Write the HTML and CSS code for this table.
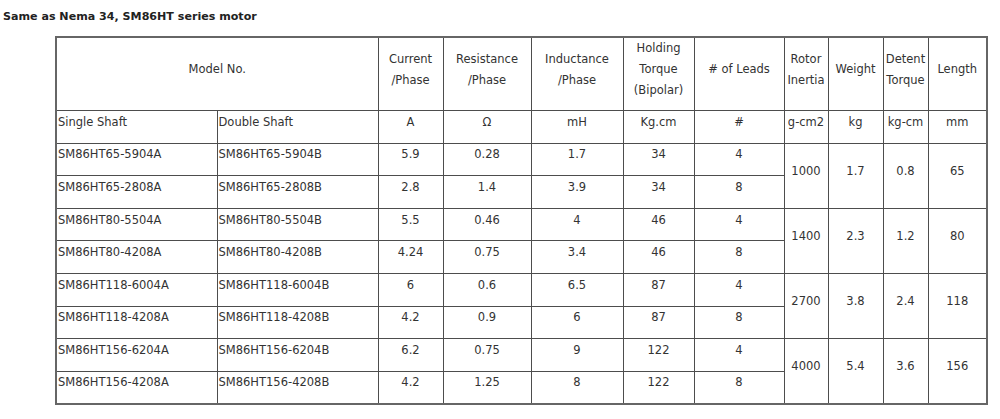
FILE: index.html
```html
<!DOCTYPE html>
<html>
<head>
<meta charset="utf-8">
<link rel="stylesheet" href="styles.css">
</head>
<body>
<p class="title">Same as Nema 34, SM86HT series motor</p>
<table class="spec">
  <colgroup>
    <col class="c-single"><col class="c-double"><col class="c-cur"><col class="c-res"><col class="c-ind"><col class="c-hold"><col class="c-leads"><col class="c-rotor"><col class="c-weight"><col class="c-detent"><col class="c-len">
  </colgroup>
  <tr class="head">
    <td colspan="2">Model No.</td>
    <td>Current<br>/Phase</td>
    <td>Resistance<br>/Phase</td>
    <td>Inductance<br>/Phase</td>
    <td>Holding<br>Torque<br>(Bipolar)</td>
    <td># of Leads</td>
    <td>Rotor<br>Inertia</td>
    <td>Weight</td>
    <td>Detent<br>Torque</td>
    <td>Length</td>
  </tr>
  <tr>
    <td class="l">Single Shaft</td>
    <td class="l">Double Shaft</td>
    <td>A</td><td>Ω</td><td>mH</td><td>Kg.cm</td><td>#</td><td>g-cm2</td><td>kg</td><td>kg-cm</td><td>mm</td>
  </tr>
  <tr>
    <td class="l">SM86HT65-5904A</td><td class="l">SM86HT65-5904B</td>
    <td>5.9</td><td>0.28</td><td>1.7</td><td>34</td><td>4</td>
    <td rowspan="2">1000</td><td rowspan="2">1.7</td><td rowspan="2">0.8</td><td rowspan="2">65</td>
  </tr>
  <tr>
    <td class="l">SM86HT65-2808A</td><td class="l">SM86HT65-2808B</td>
    <td>2.8</td><td>1.4</td><td>3.9</td><td>34</td><td>8</td>
  </tr>
  <tr>
    <td class="l">SM86HT80-5504A</td><td class="l">SM86HT80-5504B</td>
    <td>5.5</td><td>0.46</td><td>4</td><td>46</td><td>4</td>
    <td rowspan="2">1400</td><td rowspan="2">2.3</td><td rowspan="2">1.2</td><td rowspan="2">80</td>
  </tr>
  <tr>
    <td class="l">SM86HT80-4208A</td><td class="l">SM86HT80-4208B</td>
    <td>4.24</td><td>0.75</td><td>3.4</td><td>46</td><td>8</td>
  </tr>
  <tr>
    <td class="l">SM86HT118-6004A</td><td class="l">SM86HT118-6004B</td>
    <td>6</td><td>0.6</td><td>6.5</td><td>87</td><td>4</td>
    <td rowspan="2">2700</td><td rowspan="2">3.8</td><td rowspan="2">2.4</td><td rowspan="2">118</td>
  </tr>
  <tr>
    <td class="l">SM86HT118-4208A</td><td class="l">SM86HT118-4208B</td>
    <td>4.2</td><td>0.9</td><td>6</td><td>87</td><td>8</td>
  </tr>
  <tr>
    <td class="l">SM86HT156-6204A</td><td class="l">SM86HT156-6204B</td>
    <td>6.2</td><td>0.75</td><td>9</td><td>122</td><td>4</td>
    <td rowspan="2">4000</td><td rowspan="2">5.4</td><td rowspan="2">3.6</td><td rowspan="2">156</td>
  </tr>
  <tr>
    <td class="l">SM86HT156-4208A</td><td class="l">SM86HT156-4208B</td>
    <td>4.2</td><td>1.25</td><td>8</td><td>122</td><td>8</td>
  </tr>
</table>
</body>
</html>
```

FILE: styles.css
```css
html, body {
  margin: 0;
  padding: 0;
  background: #fff;
}
body {
  font-family: "DejaVu Sans", Verdana, sans-serif;
  color: #333;
}
.title {
  margin: 0;
  padding: 10px 0 0 3px;
  height: 36px;
  box-sizing: border-box;
  font-size: 11.1px;
  line-height: 14px;
  font-weight: bold;
  color: #222;
}
.spec {
  margin-left: 55px;
  border-collapse: collapse;
  table-layout: fixed;
  width: 931px;
  font-size: 11.5px;
  line-height: 21px;
  border: 2px solid #666;
}
.spec td {
  border: 1px solid #4d4d4d;
  padding: 0 1px 9px;
  text-align: center;
  vertical-align: middle;
  height: 32.6px;
  box-sizing: border-box;
  overflow: hidden;
  white-space: nowrap;
}
.spec tr.head td {
  height: 73px;
}
.spec td.l {
  text-align: left;
}
.c-single { width: 161px; }
.c-double { width: 161px; }
.c-cur { width: 65px; }
.c-res { width: 88px; }
.c-ind { width: 92px; }
.c-hold { width: 71px; }
.c-leads { width: 90px; }
.c-rotor { width: 44px; }
.c-weight { width: 55px; }
.c-detent { width: 45px; }
.c-len { width: 59px; }
```
